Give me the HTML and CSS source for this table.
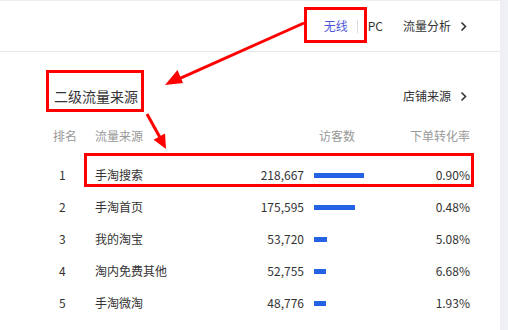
FILE: index.html
```html
<!DOCTYPE html>
<html lang="zh">
<head>
<meta charset="utf-8">
<link rel="stylesheet" href="styles.css">
</head>
<body>
<div class="page">
  <div class="panel">
    <div class="topbar">
      <span class="tab active">无线</span>
      <span class="sep"></span>
      <span class="tab">PC</span>
      <a class="link link-top">流量分析<svg class="chev" width="7" height="11" viewBox="0 0 7 11"><polyline points="1.5,1.5 5.5,5.5 1.5,9.5" fill="none" stroke="#333" stroke-width="1.6"/></svg></a>
    </div>
    <div class="section-head">
      <h2 class="title">二级流量来源</h2>
      <a class="link">店铺来源<svg class="chev" width="7" height="11" viewBox="0 0 7 11"><polyline points="1.5,1.5 5.5,5.5 1.5,9.5" fill="none" stroke="#333" stroke-width="1.6"/></svg></a>
    </div>
    <div class="table">
      <div class="th c-rank">排名</div>
      <div class="th c-src">流量来源</div>
      <div class="th c-uv">访客数</div>
      <div class="th c-cvr">下单转化率</div>

      <div class="td c-rank num">1</div>
      <div class="td c-src">手淘搜索</div>
      <div class="td c-val">218,667</div>
      <div class="td c-bar"><span class="bar" style="width:50px"></span></div>
      <div class="td c-cvr">0.90%</div>

      <div class="td c-rank num">2</div>
      <div class="td c-src">手淘首页</div>
      <div class="td c-val">175,595</div>
      <div class="td c-bar"><span class="bar" style="width:41px"></span></div>
      <div class="td c-cvr">0.48%</div>

      <div class="td c-rank num">3</div>
      <div class="td c-src">我的淘宝</div>
      <div class="td c-val">53,720</div>
      <div class="td c-bar"><span class="bar" style="width:13px"></span></div>
      <div class="td c-cvr">5.08%</div>

      <div class="td c-rank num">4</div>
      <div class="td c-src">淘内免费其他</div>
      <div class="td c-val">52,755</div>
      <div class="td c-bar"><span class="bar" style="width:12px"></span></div>
      <div class="td c-cvr">6.68%</div>

      <div class="td c-rank num">5</div>
      <div class="td c-src">手淘微淘</div>
      <div class="td c-val">48,776</div>
      <div class="td c-bar"><span class="bar" style="width:12px"></span></div>
      <div class="td c-cvr">1.93%</div>
    </div>
  </div>
  <div class="gutter"></div>
  <svg class="annot" width="508" height="330" viewBox="0 0 508 330">
    <g fill="none" stroke="#f00" stroke-width="3">
      <rect x="305.5" y="8.5" width="60" height="33"/>
      <rect x="47.5" y="71.5" width="95" height="39"/>
      <rect x="85.5" y="154.5" width="387" height="31"/>
      <line x1="304" y1="23" x2="180" y2="78.3"/>
      <line x1="147" y1="114" x2="160" y2="137.5"/>
    </g>
    <g fill="#f00">
      <polygon points="165,85 183,83 177.5,70"/>
      <polygon points="166,149 153.6,139.8 165,133.6"/>
    </g>
  </svg>
</div>
</body>
</html>
```

FILE: styles.css
```css
* { box-sizing: border-box; }
html, body { margin: 0; padding: 0; }
body {
  background: #eef0f4;
  font-family: "Noto Sans CJK SC", "Noto Sans", sans-serif;
  font-size: 12px;
  color: #333;
}
.page {
  position: relative;
  width: 508px;
  height: 330px;
  display: flex;
  overflow: hidden;
}
.panel {
  width: 500px;
  height: 330px;
  background: #fff;
  border-top: 1px solid #eceef2;
}
.gutter { flex: 1; }
.topbar {
  height: 51px;
  border-bottom: 1px solid #e8e8e8;
  display: flex;
  align-items: center;
  justify-content: flex-end;
  padding-right: 33px;
  line-height: 20px;
}
.tab { color: #333; }
.tab.active { color: #5058d8; }
.sep {
  width: 1px;
  height: 13px;
  background: #ddd;
  margin: 0 10px 0 9px;
}
.link {
  display: inline-flex;
  align-items: center;
  color: #333;
  line-height: 20px;
}
.link-top { margin-left: 20px; }
.chev { margin-left: 9px; display: block; }
.section-head {
  display: flex;
  align-items: center;
  justify-content: space-between;
  padding: 34px 33px 0 54px;
  height: 20px;
  box-sizing: content-box;
}
.title {
  margin: 0;
  font-size: 14px;
  font-weight: normal;
  line-height: 20px;
  color: #333;
}
.table {
  margin: 20px 30px 0 53px;
  display: grid;
  grid-template-columns: 42px 155px 54px 86px 80px;
  grid-template-rows: 33px repeat(5, 32px);
  align-items: center;
}
.th {
  color: #999;
  line-height: 20px;
  align-self: start;
}
.td { line-height: 20px; }
.c-rank.num { padding-left: 6px; }
.th.c-uv { grid-column: 4; padding-left: 15px; }
.th.c-cvr, .td.c-cvr { grid-column: 5; text-align: right; }
.c-val { text-align: right; }
.c-bar { padding-left: 10px; display: flex; align-items: center; }
.bar {
  display: block;
  height: 5px;
  background: #2563e6;
}
.annot {
  position: absolute;
  left: 0;
  top: 0;
  pointer-events: none;
}
```
